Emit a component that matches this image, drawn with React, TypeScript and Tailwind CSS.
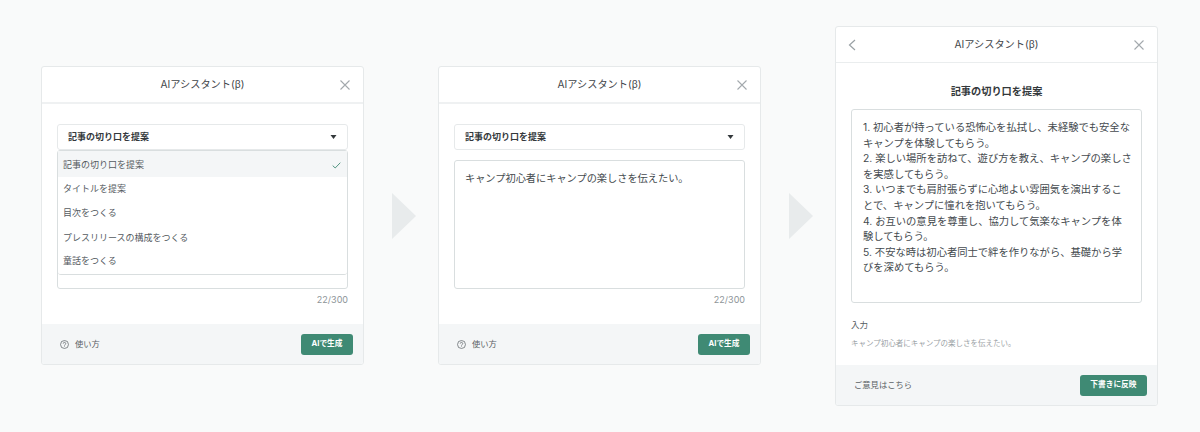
import React from "react";

const font = { fontFamily: 'Inter, "Noto Sans CJK JP", "Noto Sans", sans-serif' };

function CloseIcon() {
  return (
    <svg width="12" height="12" viewBox="0 0 12 12" fill="none" stroke="#a3a9ad" strokeWidth="1.1">
      <path d="M1.5 1.5l9 9M10.5 1.5l-9 9" />
    </svg>
  );
}

function Header({ back }: { back?: boolean }) {
  return (
    <div className={`relative flex shrink-0 items-center justify-center text-[10.2px] text-[#3f4549] ${back ? "h-[36px] border-b border-[#eaedee]" : "h-[37px] border-b-2 border-[#eff1f2]"}`}>
      {back && (
        <svg className="absolute left-[12px] top-[12px]" width="8" height="12" viewBox="0 0 8 12" fill="none" stroke="#9aa1a5" strokeWidth="1.2">
          <path d="M7 1L1.5 6L7 11" />
        </svg>
      )}
      <span>AIアシスタント(β)</span>
      <span className="absolute right-[12px] top-[12px] flex"><CloseIcon /></span>
    </div>
  );
}

function Select() {
  return (
    <div className="flex h-[26px] items-center justify-between rounded-[3px] border border-[#e6e9ea] bg-white pl-[10px] pr-[10px] text-[9px] font-bold text-[#33383b]">
      <span>記事の切り口を提案</span>
      <svg width="7" height="4" viewBox="0 0 7 4"><path d="M0.5 0h6L3.5 4z" fill="#33383b" /></svg>
    </div>
  );
}

function Footer({ children, label }: { children: React.ReactNode; label: string }) {
  return (
    <div className="flex h-[40px] shrink-0 items-center justify-between bg-[#f4f6f7] pr-[10px]">
      {children}
      <button className="flex h-[21px] items-center rounded-[3px] bg-[#3f8a74] px-[10.5px] text-[7.7px] font-bold text-white">{label}</button>
    </div>
  );
}

function Help() {
  return (
    <div className="flex items-center gap-[6px] pl-[18px] text-[8.3px] text-[#5b6266]">
      <svg width="9" height="9" viewBox="0 0 10 10" fill="none" stroke="#5b6266" strokeWidth="0.8">
        <circle cx="5" cy="5" r="4.4" />
        <path d="M3.6 4a1.4 1.4 0 1 1 2.1 1.2c-.5.3-.7.5-.7 1" />
        <path d="M5 7.1v.6" />
      </svg>
      <span>使い方</span>
    </div>
  );
}

function Card({ children, tall }: { children: React.ReactNode; tall?: boolean }) {
  return (
    <div className={`flex w-[323px] shrink-0 flex-col overflow-hidden rounded-[3px] border border-[#e6e9ea] bg-white ${tall ? "mt-[1px] h-[380px]" : "h-[299px]"}`}>
      {children}
    </div>
  );
}

function Arrow() {
  return (
    <svg className="ml-[28px] mr-[22px] shrink-0" width="24" height="46" viewBox="0 0 24 46">
      <path d="M0 0L24 23L0 46z" fill="#e8ebec" />
    </svg>
  );
}

const items: [string, string][] = [
  ["記事の切り口を提案", "h-[26px] pt-[2px] bg-[#f4f6f7]"],
  ["タイトルを提案", "h-[23px]"],
  ["目次をつくる", "h-[25px]"],
  ["プレスリリースの構成をつくる", "h-[25px]"],
  ["童話をつくる", "h-[22px]"],
];

export default function App() {
  return (
    <div style={font} className="flex h-[432px] w-[1200px] items-center overflow-hidden bg-[#f9fafa] pb-[1px] pl-[41px]">
      <Card>
        <Header />
        <div className="flex flex-1 flex-col px-[15px] pt-[20px]">
          <Select />
          <div className="h-[139px] rounded-[3px] border border-[#d9dedf] bg-white">
            <div className="rounded-[3px] border-b border-[#d9dedf] bg-white pb-[2px] text-[9px] text-[#555b5f]">
              {items.map(([t, c], i) => (
                <div key={t} className={`flex items-center justify-between pl-[5px] pr-[6px] ${c}`}>
                  <span>{t}</span>
                  {i === 0 && (
                    <svg width="9" height="7" viewBox="0 0 9 7" fill="none" stroke="#3f8a74" strokeWidth="0.9"><path d="M.7 3.6L3.2 6L8.3.7" /></svg>
                  )}
                </div>
              ))}
            </div>
          </div>
          <div className="mt-[4px] text-right text-[9px] text-[#8d9498]">22/300</div>
        </div>
        <Footer label="AIで生成"><Help /></Footer>
      </Card>
      <Arrow />
      <Card>
        <Header />
        <div className="flex flex-1 flex-col px-[15px] pt-[20px]">
          <Select />
          <div className="mt-[10px] h-[129px] rounded-[3px] border border-[#d9dedf] bg-white px-[10px] py-[9px] text-[10.2px] leading-[16px] text-[#444a4e]">
            キャンプ初心者にキャンプの楽しさを伝えたい。
          </div>
          <div className="mt-[4px] text-right text-[9px] text-[#8d9498]">22/300</div>
        </div>
        <Footer label="AIで生成"><Help /></Footer>
      </Card>
      <Arrow />
      <Card tall>
        <Header back />
        <div className="flex flex-1 flex-col px-[15px]">
          <div className="mt-[20px] text-center text-[10.2px] font-bold leading-[16px] text-[#33383b]">記事の切り口を提案</div>
          <div className="mt-[10px] h-[194px] whitespace-nowrap rounded-[3px] border border-[#d9dedf] bg-white px-[11px] py-[10px] text-[10.3px] leading-[15.6px] text-[#444a4e]">
            1. 初心者が持っている恐怖心を払拭し、未経験でも安全な<br />
            キャンプを体験してもらう。<br />
            2. 楽しい場所を訪ねて、遊び方を教え、キャンプの楽しさ<br />
            を実感してもらう。<br />
            3. いつまでも肩肘張らずに心地よい雰囲気を演出するこ<br />
            とで、キャンプに憧れを抱いてもらう。<br />
            4. お互いの意見を尊重し、協力して気楽なキャンプを体<br />
            験してもらう。<br />
            5. 不安な時は初心者同士で絆を作りながら、基礎から学<br />
            びを深めてもらう。
          </div>
          <div className="mt-[15px] text-[8.5px] leading-[14px] text-[#555b5f]">入力</div>
          <div className="mt-[6px] text-[7.5px] leading-[12px] text-[#9aa1a5]">キャンプ初心者にキャンプの楽しさを伝えたい。</div>
        </div>
        <Footer label="下書きに反映">
          <span className="pl-[18px] text-[8.3px] text-[#5b6266]">ご意見はこちら</span>
        </Footer>
      </Card>
    </div>
  );
}
